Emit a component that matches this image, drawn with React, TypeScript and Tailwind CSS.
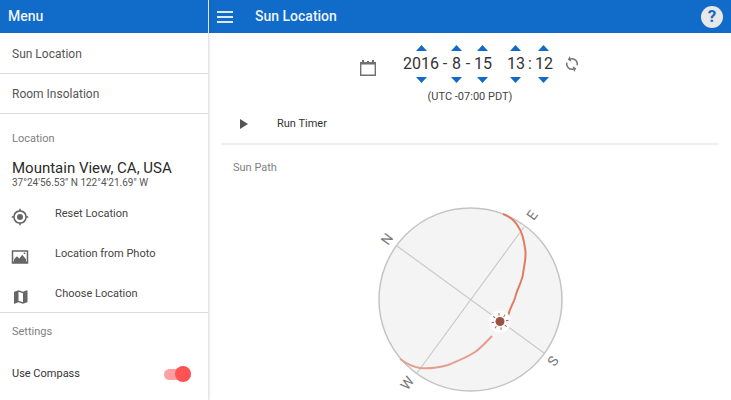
import { useState } from "react";
import type { ReactNode } from "react";

function NavLink({ children }: { children: ReactNode }) {
  return (
    <a href="#" className="flex h-10 items-center border-b border-[#dcdcdc] px-3 text-[12px] text-[#555]">
      {children}
    </a>
  );
}

function LocationAction({ icon, label }: { icon: string; label: string }) {
  return (
    <button type="button" className="flex h-10 w-full items-center px-3 text-left">
      <svg viewBox="0 0 24 24" className="mt-[10px] -ml-px h-[18px] w-[18px] shrink-0 fill-[#666]" aria-hidden="true">
        <path d={icon} fillRule="evenodd" />
      </svg>
      <span className="mt-1 ml-[26px] text-[11px] text-[#444]">{label}</span>
    </button>
  );
}

function Stepper({ value, label, min, max }: { value: number; label: string; min: number; max: number }) {
  const [current, setCurrent] = useState(value);
  return (
    <div className="flex flex-col items-center" role="group" aria-label={label}>
      <button type="button" aria-label={`Increase ${label}`} onClick={() => setCurrent(Math.min(max, current + 1))}>
        <svg viewBox="0 0 11 6" className="block h-[6px] w-[11px] fill-[#1269c7]"><path d="M5.500 0L11 6H0z" /></svg>
      </button>
      <span className="my-0.5 text-[16px] leading-[22px]">{current}</span>
      <button type="button" aria-label={`Decrease ${label}`} onClick={() => setCurrent(Math.max(min, current - 1))}>
        <svg viewBox="0 0 11 6" className="block h-[6px] w-[11px] fill-[#1269c7]"><path d="M5.500 6L0 0h11z" /></svg>
      </button>
    </div>
  );
}

function SunPath() {
  const rays = [0, 45, 90, 135, 180, 225, 270, 315];
  return (
    <svg viewBox="0 0 220 205" className="mx-auto block h-[205px] w-[220px]" role="img" aria-label="Sun path compass">
      <circle cx="110.500" cy="104.500" r="91.500" fill="#f4f4f4" stroke="#c4c4c4" strokeWidth="1.500" />
      <path d="M37 51L184 158M164 32L57 178" stroke="#cacaca" strokeWidth="1.200" />
      <path
        d="M143 19C151 22 156 27 159 33C163 39 164 46 165 53C167 62 164 70 163 79C162 87 157 94 155 103C153 109 150 113 148 121"
        fill="none" stroke="#e07b60" strokeWidth="2"
      />
      <path
        d="M132 141C126 147 122 152 115 157C106 163 97 166 88 170C77 173 68 174 60 173C53 172 47 169 40 164"
        fill="none" stroke="#e69e8c" strokeWidth="2"
      />
      <circle cx="140" cy="126.500" r="11" fill="#fff" />
      <circle cx="140" cy="126.500" r="4.500" fill="#9c5242" />
      {rays.map((a) => (
        <path key={a} d="M140 120.500v-2.500" stroke="#a8604f" strokeWidth="1" transform={`rotate(${a - 8} 140 126.500)`} />
      ))}
      <g fontSize="14" fill="#777" textAnchor="middle">
        <text transform="translate(27 44) rotate(-54)" dy="5">N</text>
        <text transform="translate(172 20) rotate(-54)" dy="5">E</text>
        <text transform="translate(193 166) rotate(-54)" dy="5">S</text>
        <text transform="translate(47 188) rotate(-54)" dy="5">W</text>
      </g>
    </svg>
  );
}

export default function App() {
  const [compass, setCompass] = useState(true);
  return (
    <div className="flex h-screen overflow-hidden bg-white font-['Roboto',sans-serif] text-[#333]">
      <aside className="z-10 w-[209px] shrink-0 border-r border-black/10 bg-white shadow-[0_0_3px_rgba(0,0,0,0.15)]">
        <header className="flex h-[33px] items-center bg-[#116bc9] px-2 text-[14px] font-medium text-white/95">Menu</header>
        <nav className="pt-px">
          <NavLink>Sun Location</NavLink>
          <NavLink>Room Insolation</NavLink>
        </nav>
        <section className="border-b border-[#dcdcdc] pt-[17px]">
          <h2 className="px-3 text-[11px] leading-4 text-[#808080]">Location</h2>
          <p className="mt-[11px] px-3 text-[15px] leading-5 text-[#2a2a2a]">Mountain View, CA, USA</p>
          <p className="px-3 text-[10px] leading-[10px] text-[#555]">37°24'56.53" N 122°4'21.69" W</p>
          <div className="mt-1">
            <LocationAction
              label="Reset Location"
              icon="M12 8a4 4 0 100 8 4 4 0 000-8zM21 11a9 9 0 00-8-8V1h-2v2a9 9 0 00-8 8H1v2h2a9 9 0 008 8v2h2v-2a9 9 0 008-8h2v-2zM12 19a7 7 0 110-14 7 7 0 010 14z"
            />
            <LocationAction
              label="Location from Photo"
              icon="M1 3h22v18H1zM3 5v13h18V5zM4 18v-3l4-4 3 3 4-5 5 6v3zM17 6h2v2h-2z"
            />
            <LocationAction
              label="Choose Location"
              icon="M21.500 3l-.2 0L16 5.100 10 3 4.400 4.900a.5.500 0 00-.4.500V20.500a.5.500 0 00.7.500L10 18.900l6 2.100 5.600-1.900a.5.500 0 00.4-.5V3.500a.5.500 0 00-.5-.5zM16 19l-6-2.100V5l6 2.100z"
            />
          </div>
        </section>
        <section className="pt-[11px]">
          <h2 className="px-3 text-[11px] leading-4 text-[#808080]">Settings</h2>
          <label className="mt-3 flex h-[44px] items-center justify-between pr-[17px] pl-3 text-[11px] text-[#333]">
            Use Compass
            <span className="relative flex h-4 w-[27px] items-center">
              <input
                type="checkbox"
                role="switch"
                checked={compass}
                onChange={(e) => setCompass(e.target.checked)}
                className="peer h-[11px] w-full appearance-none rounded-full bg-[#bbb] checked:bg-[#ff9f9f]"
              />
              <span className="pointer-events-none absolute left-0 h-4 w-4 rounded-full bg-[#eee] peer-checked:right-0 peer-checked:left-auto peer-checked:bg-[#ff5252]" />
            </span>
          </label>
        </section>
      </aside>

      <main className="min-w-0 flex-1">
        <header className="flex h-[33px] items-center bg-[#116bc9] px-2 text-white">
          <button type="button" aria-label="Open menu">
            <svg viewBox="0 0 16 12" className="block h-3 w-4 fill-[#dce9f8]"><path d="M0 0h16v2H0zM0 5h16v2H0zM0 10h16v2H0z" /></svg>
          </button>
          <h1 className="ml-[22px] text-[14px] font-medium text-white/95">Sun Location</h1>
          <button type="button" aria-label="Help" className="ml-auto flex h-[22px] w-[22px] items-center justify-center rounded-full bg-[#e8e8e8] text-[17px] font-bold text-[#116bc9]">
            ?
          </button>
        </header>

        <div className="flex items-center justify-center pt-3">
          <button type="button" aria-label="Pick date" className="mt-2 mr-[26px]">
            <svg viewBox="0 0 18 18" className="block h-[18px] w-[18px]">
              <path d="M1.700 4h14.600v12.300H1.700z" fill="none" stroke="#707070" strokeWidth="1.400" />
              <path d="M1 3h16v2.500H1zM3 1h2v3H3zM8 2h2v2H8zM13 1h2v3h-2z" fill="#707070" />
            </svg>
          </button>
          <Stepper value={2016} label="year" min={1900} max={2100} />
          <span className="w-3 text-center text-[16px] leading-[22px]">-</span>
          <Stepper value={8} label="month" min={1} max={12} />
          <span className="w-3 text-center text-[16px] leading-[22px]">-</span>
          <Stepper value={15} label="day" min={1} max={31} />
          <span className="w-[15px]" />
          <Stepper value={13} label="hour" min={0} max={23} />
          <span className="w-[10px] text-center text-[16px] leading-[22px]">:</span>
          <Stepper value={12} label="minute" min={0} max={59} />
          <button type="button" aria-label="Reset to now" className="ml-[10px]">
            <svg viewBox="0 0 24 24" className="block h-[18px] w-[18px] fill-[#777]">
              <path d="M12 4V1L8 5l4 4V6a6 6 0 015.300 8.800l1.460 1.460A8 8 0 0012 4zm0 14a6 6 0 01-5.300-8.800L5.240 7.740A8 8 0 0012 20v3l4-4-4-4z" transform="rotate(-15 12 12)" />
            </svg>
          </button>
        </div>
        <p className="mt-[6px] text-center text-[11px] leading-4 text-[#444]">(UTC -07:00 PDT)</p>

        <div className="mx-3 border-b-2 border-[#f0f0f0]">
          <button type="button" className="flex h-[38px] w-full items-center px-[19px] text-left text-[11px]">
            <svg viewBox="0 0 8 10" className="h-[10px] w-2 fill-[#555]"><path d="M0 0l8 5-8 5z" /></svg>
            <span className="ml-[29px]">Run Timer</span>
          </button>
        </div>

        <section>
          <h2 className="mt-[15px] px-6 text-[11px] leading-4 text-[#808080]">Sun Path</h2>
          <div className="mt-[19px]"><SunPath /></div>
        </section>
      </main>
    </div>
  );
}
